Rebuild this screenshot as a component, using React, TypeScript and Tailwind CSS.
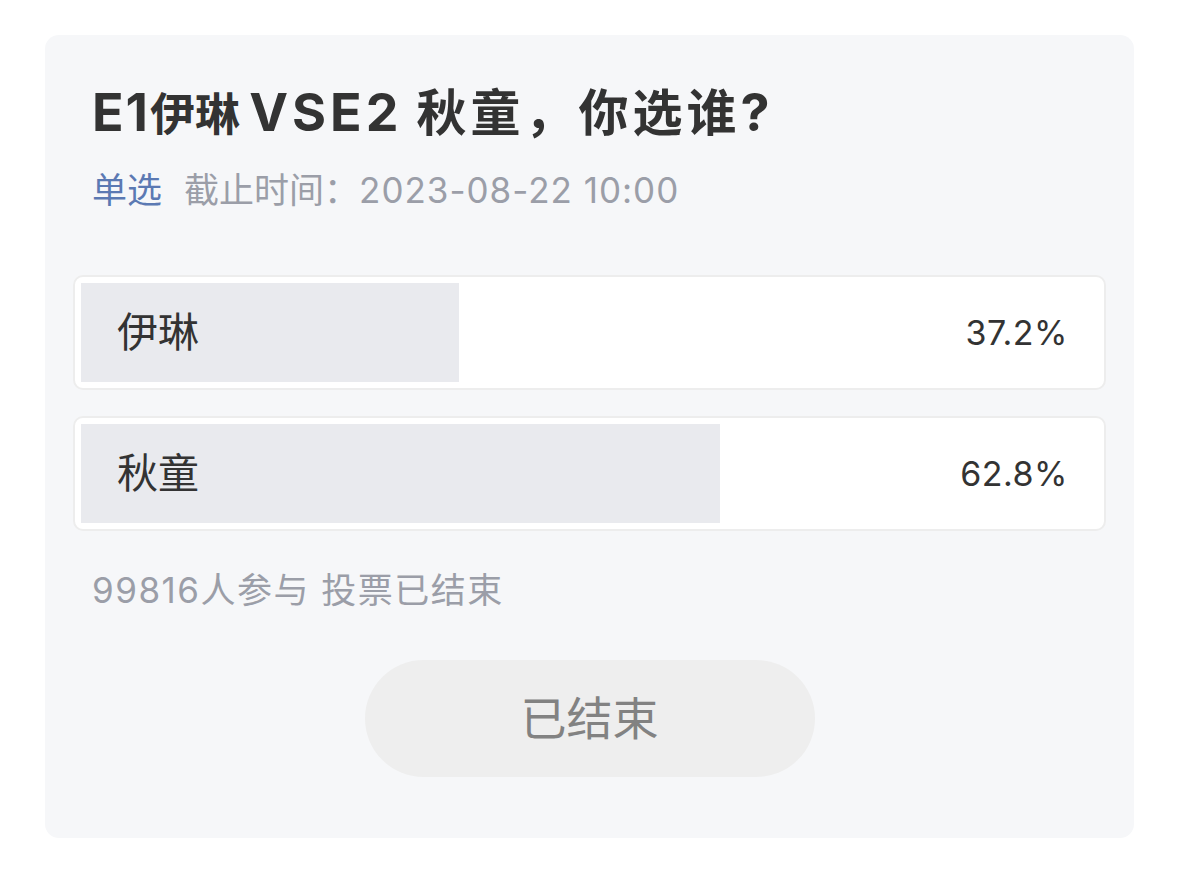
import React from "react";

const FONT = {
  fontFamily:
    '"Inter", "Noto Sans CJK SC", "Noto Sans", sans-serif',
};

const options = [
  { label: "伊琳", pct: 37.2 },
  { label: "秋童", pct: 62.8 },
];

export default function App() {
  return (
    <div className="w-full h-[874px] bg-white pt-[35px] pl-[45px]" style={FONT}>
      <div className="w-[1089px] h-[803px] rounded-[14px] bg-[#f6f7f9] px-[28px] pt-[51px] flex flex-col">
        <h1 className="pl-[19px] h-[56px] text-[47px] leading-[56px] font-bold text-[#333333] tracking-[3px] whitespace-nowrap">
          <span className="text-[52px] leading-none tracking-[2px]">E1</span>
          <span className="text-[45px] tracking-[0px]">伊琳</span>
          <span className="[word-spacing:-5px]">{" "}</span>
          <span className="text-[52px] leading-none tracking-[4px]">VSE2</span>
          <span>{" "}</span>
          <span className="text-[50px] leading-none tracking-[4px]">秋童，你选谁</span>
          <span className="text-[52px] leading-none">?</span>
        </h1>
        <div className="pl-[19px] mt-[26px] flex items-center text-[35px] leading-[44px]">
          <span className="text-[#5b79b3]">单选</span>
          <span className="ml-[22px] text-[#9b9ea8]">
            截止时间：<span className="tracking-[1px]">2023-08-22 10:00</span>
          </span>
        </div>
        <div className="mt-[63px] flex flex-col gap-[26px]">
          {options.map((o) => (
            <div
              key={o.label}
              className="h-[115px] rounded-[10px] border-2 border-[#ededed] bg-white p-[6px]"
            >
              <div
                className="h-full flex items-center justify-between pl-[36px] pr-[30px]"
                style={{
                  background: `linear-gradient(to right, #e9eaee ${o.pct}%, #ffffff ${o.pct}%)`,
                }}
              >
                <span className="text-[41px] text-[#333333]">{o.label}</span>
                <span className="text-[34px] text-[#333333] tracking-[0.5px]">{o.pct}%</span>
              </div>
            </div>
          ))}
        </div>
        <div className="pl-[19px] mt-[37px] text-[35px] leading-[44px] text-[#9b9ea8] tracking-[1.5px]">
          99816人参与 投票已结束
        </div>
        <div className="mt-[48px] flex justify-center">
          <div className="w-[450px] h-[117px] rounded-full bg-[#eeeeee] flex items-center justify-center text-[46px] text-[#828282]">
            已结束
          </div>
        </div>
      </div>
    </div>
  );
}
